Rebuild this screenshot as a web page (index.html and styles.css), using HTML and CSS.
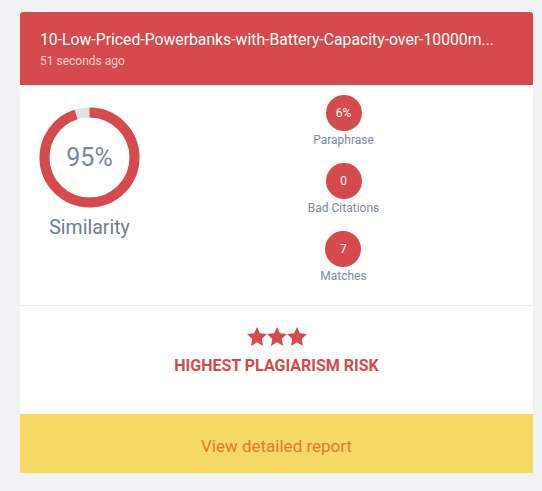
FILE: index.html
```html
<!DOCTYPE html>
<html lang="en">
<head>
  <meta charset="UTF-8" />
  <title>Plagiarism report</title>
  <link rel="stylesheet" href="styles.css">
</head>
<body>

  <div class="card">
    <div class="card-header">
      <div class="doc-title">10-Low-Priced-Powerbanks-with-Battery-Capacity-over-10000m...</div>
      <div class="doc-time">51 seconds ago</div>
    </div>

    <div class="card-stats">
      <div class="score">
        <svg class="ring" width="101" height="101" viewBox="0 0 101 101">
          <circle cx="50.5" cy="50.5" r="45" fill="none" stroke="#e2e2e2" stroke-width="10" />
          <circle cx="50.5" cy="50.5" r="45" fill="none" stroke="#d64a4d" stroke-width="10"
            stroke-dasharray="268.6 282.7" transform="rotate(-90 50.5 50.5)" />
        </svg>
        <div class="ring-value">95%</div>
        <div class="score-label">Similarity</div>
      </div>

      <div class="metrics">
        <div class="metric">
          <div class="bubble">6%</div>
          <div class="metric-label">Paraphrase</div>
        </div>
        <div class="metric">
          <div class="bubble">0</div>
          <div class="metric-label">Bad Citations</div>
        </div>
        <div class="metric">
          <div class="bubble">7</div>
          <div class="metric-label">Matches</div>
        </div>
      </div>
    </div>

    <div class="risk">
      <div class="stars">
        <svg width="20" height="19" viewBox="0 0 24 23"><polygon points="12,0 15.5,7.6 24,8.6 17.7,14.4 19.4,23 12,18.6 4.6,23 6.3,14.4 0,8.6 8.5,7.6" /></svg>
        <svg width="20" height="19" viewBox="0 0 24 23"><polygon points="12,0 15.5,7.6 24,8.6 17.7,14.4 19.4,23 12,18.6 4.6,23 6.3,14.4 0,8.6 8.5,7.6" /></svg>
        <svg width="20" height="19" viewBox="0 0 24 23"><polygon points="12,0 15.5,7.6 24,8.6 17.7,14.4 19.4,23 12,18.6 4.6,23 6.3,14.4 0,8.6 8.5,7.6" /></svg>
      </div>
      <div class="risk-text">HIGHEST PLAGIARISM RISK</div>
    </div>

    <a class="report-link" href="#">View detailed report</a>
  </div>

</body>
</html>
```

FILE: styles.css
```css
body {
  margin: 0;
  padding: 12px 9px 17px 20px;
  background: #eff3f4;
  font-family: Roboto, 'Noto Sans', sans-serif;
}

.card {
  width: 513px;
  background: #fff;
  border-radius: 3px 3px 0 0;
  overflow: hidden;
}

.card-header {
  background: #d64a4d;
  color: #fff;
  padding: 18px 20px 16px 20px;
  height: 39px;
}

.doc-title {
  font-size: 15.75px;
  line-height: 20px;
  white-space: nowrap;
}

.doc-time {
  font-size: 12px;
  line-height: 16px;
  margin-top: 3px;
  color: #f6d2d3;
}

.card-stats {
  display: grid;
  grid-template-columns: 101px 1fr;
  column-gap: 14px;
  padding: 10px 0 22px 19px;
  border-bottom: 1px solid #ebebeb;
}

.score {
  position: relative;
  padding-top: 12px;
  text-align: center;
}

.ring {
  display: block;
}

.ring-value {
  position: absolute;
  top: 12px;
  left: 0;
  width: 101px;
  line-height: 101px;
  font-size: 25px;
  color: #7b8897;
}

.score-label {
  margin-top: 8px;
  font-size: 19.5px;
  line-height: 24px;
  color: #6d7e90;
  white-space: nowrap;
  margin-left: -20px;
  margin-right: -20px;
}

.metrics {
  display: flex;
  flex-direction: column;
  align-items: center;
  gap: 16px;
}

.metric {
  display: flex;
  flex-direction: column;
  align-items: center;
}

.bubble {
  width: 36px;
  height: 36px;
  border-radius: 50%;
  background: #d64a4d;
  color: #fff;
  font-size: 12px;
  line-height: 36px;
  text-align: center;
}

.metric-label {
  margin-top: 2px;
  font-size: 12px;
  line-height: 14px;
  color: #7d8b99;
}

.risk {
  height: 108px;
  padding-top: 21px;
  box-sizing: border-box;
  text-align: center;
}

.stars {
  display: flex;
  justify-content: center;
}

.stars svg {
  fill: #d64a4d;
}

.risk-text {
  margin-top: 10px;
  font-size: 16px;
  line-height: 20px;
  font-weight: bold;
  color: #d64a4d;
}

.report-link {
  display: block;
  height: 59px;
  line-height: 64px;
  background: #f6d864;
  color: #e07a2c;
  font-size: 17px;
  text-align: center;
  text-decoration: none;
}
```
